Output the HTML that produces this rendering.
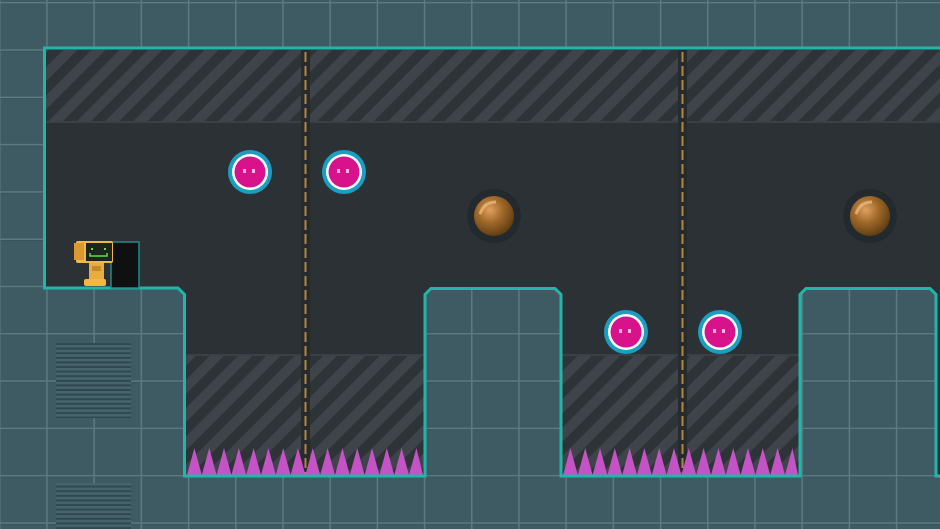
<!DOCTYPE html>
<html><head><meta charset="utf-8"><style>
html,body{margin:0;padding:0;background:#3d5a63;overflow:hidden}
svg{display:block}
</style></head><body>
<svg width="940" height="529" viewBox="0 0 940 529" xmlns="http://www.w3.org/2000/svg">
<defs>
<pattern id="tile" x="-1" y="2" width="47.2" height="47.3" patternUnits="userSpaceOnUse">
<rect width="47.2" height="47.3" fill="#3e5b64"/>
<rect x="0" y="0" width="47.2" height="1.5" fill="#5c7a82"/>
<rect x="0" y="0" width="1.5" height="47.3" fill="#5c7a82"/>
<rect x="1.5" y="1.5" width="46" height="0.8" fill="#36515a"/>
</pattern>
<pattern id="hatch" width="20" height="20" patternUnits="userSpaceOnUse" patternTransform="rotate(45)">
<rect width="20" height="20" fill="#2e3337"/>
<rect width="10" height="20" fill="#3e444a"/>
</pattern>
<pattern id="vent" width="80" height="4.6" patternUnits="userSpaceOnUse">
<rect width="80" height="4.6" fill="#46646d"/>
<rect y="2.6" width="80" height="2" fill="#2f4850"/>
</pattern>
<radialGradient id="bronze" cx="0.4" cy="0.35" r="0.7">
<stop offset="0" stop-color="#e0a060"/><stop offset="0.45" stop-color="#a06a2a"/><stop offset="1" stop-color="#5a3810"/>
</radialGradient>
</defs>
<rect width="940" height="529" fill="url(#tile)"/>
<rect x="56" y="343" width="75" height="75" fill="url(#vent)"/>
<rect x="56" y="483" width="75" height="46" fill="url(#vent)"/>
<path d="M44 48 H940 V476 H936 V294 L930 288 H806 L800 294 V476 H561 V294 L555 288 H431 L425 294 V476 H184 V294 L178 288 H44 Z" fill="#2b3134"/>
<rect x="46" y="50" width="894" height="71" fill="url(#hatch)"/>
<rect x="46" y="121" width="894" height="2" fill="#3a4146"/>
<rect x="186" y="355" width="239" height="121" fill="url(#hatch)"/>
<rect x="186" y="354" width="239" height="2" fill="#3a4146"/>
<rect x="561" y="355" width="239" height="121" fill="url(#hatch)"/>
<rect x="561" y="354" width="239" height="2" fill="#3a4146"/>
<rect x="301" y="50" width="9" height="426" fill="#262b2e"/>
<line x1="305.5" y1="52" x2="305.5" y2="476" stroke="#b58443" stroke-width="2" stroke-dasharray="10 4"/>
<rect x="678" y="50" width="9" height="426" fill="#262b2e"/>
<line x1="682.5" y1="52" x2="682.5" y2="476" stroke="#b58443" stroke-width="2" stroke-dasharray="10 4"/>
<path d="M187 475 L194.4 448 L201.8 475 L209.2 448 L216.6 475 L224 448 L231.4 475 L238.8 448 L246.2 475 L253.6 448 L261 475 L268.4 448 L275.8 475 L283.2 448 L290.6 475 L298 448 L305.4 475 L312.8 448 L320.2 475 L327.6 448 L335 475 L342.4 448 L349.8 475 L357.2 448 L364.6 475 L372 448 L379.4 475 L386.8 448 L394.2 475 L401.6 448 L409 475 L416.4 448 L423 475 Z" fill="#c453c6"/>
<path d="M563 475 L570.4 448 L577.8 475 L585.2 448 L592.6 475 L600 448 L607.4 475 L614.8 448 L622.2 475 L629.6 448 L637 475 L644.4 448 L651.8 475 L659.2 448 L666.6 475 L674 448 L681.4 475 L688.8 448 L696.2 475 L703.6 448 L711 475 L718.4 448 L725.8 475 L733.2 448 L740.6 475 L748 448 L755.4 475 L762.8 448 L770.2 475 L777.6 448 L785 475 L792.4 448 L798 475 Z" fill="#c453c6"/>
<path d="M940 48 H44.5 V288 H178 L184.5 294.5 V476 H425 V294.5 L431 288.5 H555 L561 294.5 V476 H800 V294.5 L806 288.5 H930 L936 294.5 V476 H940" fill="none" stroke="#22b6aa" stroke-width="3"/>
<rect x="111" y="242" width="28" height="46" fill="#0e1012" stroke="#1f8c86" stroke-width="1.5"/>
<rect x="76" y="241" width="37" height="22" rx="2" fill="#f0b848"/>
<rect x="74" y="243" width="10" height="17" fill="#d9992f"/>
<rect x="86" y="243" width="26" height="18" fill="#1c2420"/>
<rect x="91" y="248" width="2" height="2" fill="#6cd84a"/><rect x="104" y="248" width="2" height="2" fill="#6cd84a"/>
<path d="M90 253 v3 h17 v-3" fill="none" stroke="#6cd84a" stroke-width="1.5"/>
<rect x="89" y="263" width="15" height="16" fill="#e6ae40"/>
<rect x="92" y="266" width="9" height="5" fill="#c58a2a"/>
<rect x="84" y="279" width="22" height="7" rx="2" fill="#f0b848"/>
<g>
<circle cx="250" cy="172" r="22" fill="#1c9ec0"/><circle cx="250" cy="172" r="18" fill="#fff"/><circle cx="250" cy="172" r="15.5" fill="#d8128a"/>
<rect x="243" y="169" width="3" height="4" fill="#f7b7dc"/><rect x="252" y="169" width="3" height="4" fill="#f7b7dc"/>
</g>
<g>
<circle cx="344" cy="172" r="22" fill="#1c9ec0"/><circle cx="344" cy="172" r="18" fill="#fff"/><circle cx="344" cy="172" r="15.5" fill="#d8128a"/>
<rect x="337" y="169" width="3" height="4" fill="#f7b7dc"/><rect x="346" y="169" width="3" height="4" fill="#f7b7dc"/>
</g>
<g>
<circle cx="626" cy="332" r="22" fill="#1c9ec0"/><circle cx="626" cy="332" r="18" fill="#fff"/><circle cx="626" cy="332" r="15.5" fill="#d8128a"/>
<rect x="619" y="329" width="3" height="4" fill="#f7b7dc"/><rect x="628" y="329" width="3" height="4" fill="#f7b7dc"/>
</g>
<g>
<circle cx="720" cy="332" r="22" fill="#1c9ec0"/><circle cx="720" cy="332" r="18" fill="#fff"/><circle cx="720" cy="332" r="15.5" fill="#d8128a"/>
<rect x="713" y="329" width="3" height="4" fill="#f7b7dc"/><rect x="722" y="329" width="3" height="4" fill="#f7b7dc"/>
</g>
<circle cx="494" cy="216" r="27" fill="#232a2e"/>
<circle cx="494" cy="216" r="20" fill="url(#bronze)"/>
<path d="M480 214 q4 -12 16 -12" fill="none" stroke="#f0c080" stroke-width="3" opacity="0.7"/>
<circle cx="870" cy="216" r="27" fill="#232a2e"/>
<circle cx="870" cy="216" r="20" fill="url(#bronze)"/>
<path d="M856 214 q4 -12 16 -12" fill="none" stroke="#f0c080" stroke-width="3" opacity="0.7"/>
</svg>
</body></html>
